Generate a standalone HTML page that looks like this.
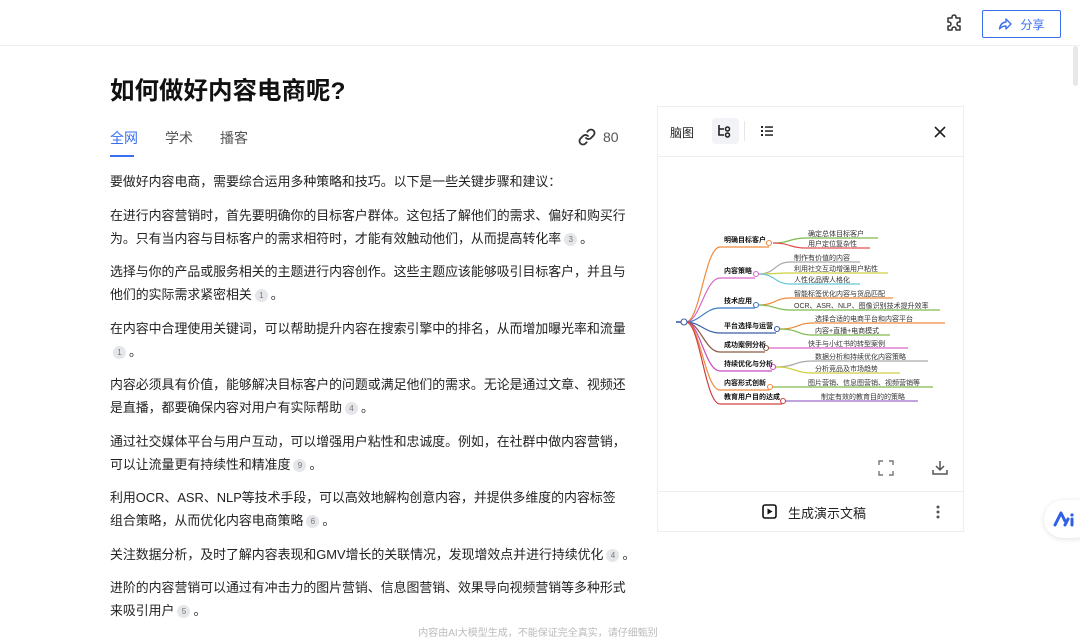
<!DOCTYPE html>
<html><head><meta charset="utf-8"><style>
*{margin:0;padding:0;box-sizing:border-box}
body{width:1080px;height:637px;overflow:hidden;background:#fff;font-family:"Liberation Sans","Noto Sans CJK SC",sans-serif;color:#222;position:relative}
.hdr{position:absolute;left:0;top:0;width:1080px;height:46px;border-bottom:1px solid #eef0f3}
.share{position:absolute;left:982px;top:10px;width:79px;height:28px;border:1px solid #3a6ff0;border-radius:2px;color:#3a6ff0;font-size:12px;display:flex;align-items:center;justify-content:center;gap:8px}
h1{position:absolute;left:110px;top:72px;font-size:24.5px;font-weight:bold;color:#111}
.tabs{position:absolute;left:110px;top:128px;font-size:14px;color:#555}
.tabs span{position:absolute;white-space:nowrap}
.ul{position:absolute;left:110px;top:155px;width:24px;height:2px;background:#3a6ff0}
.body{position:absolute;left:110px;top:170px;width:516px;font-size:12.9px;line-height:23px;color:#222}
.body p{margin-bottom:10.5px}
.n{display:inline-block;width:13px;height:13px;border-radius:50%;background:#e4e6ea;color:#777;font-size:8px;line-height:13px;text-align:center;vertical-align:1px;margin:0 3px}
.panel{position:absolute;left:657px;top:106px;width:307px;height:426px;border:1px solid #eceef2}
.ph{height:50px;border-bottom:1px solid #eceef2;position:relative}
.pf{position:absolute;left:0;top:384px;width:305px;height:41px;border-top:1px solid #eceef2}
.foot{position:absolute;top:624px;left:0;width:1076px;text-align:center;font-size:10px;color:#bbb}
</style></head><body>
<div class="hdr"></div>
<svg style="position:absolute;left:945px;top:14px" width="20" height="20" viewBox="0 0 20 20"><path d="M7 3a2 2 0 0 1 4 0v1h4v4h-1a2 2 0 0 0 0 4h1v4h-4v-1a2 2 0 0 0-4 0v1H3v-4h1a2 2 0 0 0 0-4H3V4h4z" fill="none" stroke="#333" stroke-width="1.5" stroke-linejoin="round"/></svg>
<div class="share"><svg width="14" height="14" viewBox="0 0 14 14"><path d="M8 2l5 5-5 5V9C5 9 3 10 1.5 12 2 8 4 5.5 8 5z" fill="none" stroke="#3a6ff0" stroke-width="1.4" stroke-linejoin="round"/></svg><span>分享</span></div>
<div style="position:absolute;left:1073px;top:46px;width:5px;height:40px;background:#e8e8e8;border-radius:3px"></div>
<h1>如何做好内容电商呢?</h1>
<div class="tabs"><span style="left:0;color:#3a6ff0">全网</span><span style="left:55px">学术</span><span style="left:110px">播客</span></div>
<div class="ul"></div>
<svg style="position:absolute;left:578px;top:128px" width="18" height="18" viewBox="0 0 18 18"><path d="M8 10a3.5 3.5 0 0 0 5 0l2.5-2.5a3.5 3.5 0 0 0-5-5L9.3 3.7M10 8a3.5 3.5 0 0 0-5 0L2.5 10.5a3.5 3.5 0 0 0 5 5l1.2-1.2" fill="none" stroke="#333" stroke-width="1.8" stroke-linecap="round"/></svg>
<div style="position:absolute;left:603px;top:129px;font-size:14px;color:#555">80</div>
<div class="body">
<p>要做好内容电商，需要综合运用多种策略和技巧。以下是一些关键步骤和建议：</p>
<p>在进行内容营销时，首先要明确你的目标客户群体。这包括了解他们的需求、偏好和购买行为。只有当内容与目标客户的需求相符时，才能有效触动他们，从而提高转化率<span class="n">3</span>。</p>
<p>选择与你的产品或服务相关的主题进行内容创作。这些主题应该能够吸引目标客户，并且与他们的实际需求紧密相关<span class="n">1</span>。</p>
<p>在内容中合理使用关键词，可以帮助提升内容在搜索引擎中的排名，从而增加曝光率和流量<span class="n">1</span>。</p>
<p>内容必须具有价值，能够解决目标客户的问题或满足他们的需求。无论是通过文章、视频还是直播，都要确保内容对用户有实际帮助<span class="n">4</span>。</p>
<p>通过社交媒体平台与用户互动，可以增强用户粘性和忠诚度。例如，在社群中做内容营销，可以让流量更有持续性和精准度<span class="n">9</span>。</p>
<p>利用OCR、ASR、NLP等技术手段，可以高效地解构创意内容，并提供多维度的内容标签组合策略，从而优化内容电商策略<span class="n">6</span>。</p>
<p style="white-space:nowrap">关注数据分析，及时了解内容表现和GMV增长的关联情况，发现增效点并进行持续优化<span class="n">4</span>。</p>
<p>进阶的内容营销可以通过有冲击力的图片营销、信息图营销、效果导向视频营销等多种形式来吸引用户<span class="n">5</span>。</p>
</div>
<div class="panel">
<div class="ph">
<span style="position:absolute;left:12px;top:17px;font-size:12px;color:#222">脑图</span>
<div style="position:absolute;left:54px;top:11px;width:27px;height:26px;background:#f1f3f6;border-radius:4px"></div>
<svg style="position:absolute;left:59px;top:16px" width="16" height="16" viewBox="0 0 16 16"><path d="M2 2v10h5M2 6h5" fill="none" stroke="#222" stroke-width="1.6"/><circle cx="10.5" cy="6" r="2" fill="none" stroke="#222" stroke-width="1.5"/><circle cx="10.5" cy="12" r="2" fill="none" stroke="#222" stroke-width="1.5"/></svg>
<div style="position:absolute;left:86px;top:14px;width:1px;height:20px;background:#e6e6e6"></div>
<svg style="position:absolute;left:102px;top:17px" width="14" height="14" viewBox="0 0 14 14"><g fill="#222"><rect x="1" y="2" width="2" height="2"/><rect x="1" y="6" width="2" height="2"/><rect x="1" y="10" width="2" height="2"/><rect x="5" y="2.3" width="8" height="1.5"/><rect x="5" y="6.3" width="8" height="1.5"/><rect x="5" y="10.3" width="8" height="1.5"/></g></svg>
<svg style="position:absolute;left:276px;top:19px" width="12" height="12" viewBox="0 0 12 12"><path d="M1 1l10 10M11 1L1 11" stroke="#222" stroke-width="1.6"/></svg>
</div>
<svg style="position:absolute;left:-658px;top:-107px" width="1080" height="637" font-family="Liberation Sans,Noto Sans CJK SC,sans-serif" font-size="7">
<g fill="none" stroke-width="1.2">
<path d="M676 322h8" stroke="#3b5fa8" stroke-width="1.6"/>
<path d="M686 322C700 322 705 247 720 247H769" stroke="#f08a3c"/>
<path d="M686 322C700 322 705 278 720 278H755" stroke="#d966c7"/>
<path d="M686 322C700 322 705 308 720 308H755" stroke="#3a7ac4"/>
<path d="M686 322C700 322 705 333 720 333H776" stroke="#3b5fa8"/>
<path d="M686 322C700 322 705 352 720 352H765" stroke="#8a5a44"/>
<path d="M686 322C700 322 705 371 720 371H772" stroke="#c84bc0"/>
<path d="M686 322C700 322 705 390 720 390H769" stroke="#f08a3c"/>
<path d="M686 322C700 322 705 404 720 404H782" stroke="#d04040"/>
<path d="M773 243C790 243 790 238 805 238H878" stroke="#7dbb4a"/>
<path d="M773 243C790 243 790 248 805 248H870" stroke="#e05050"/>
<path d="M759 274C775 274 775 262 790 262H860" stroke="#aaa"/>
<path d="M759 274C775 274 775 273 790 273H888" stroke="#cfd040"/>
<path d="M759 274C775 274 775 284 790 284H860" stroke="#66c8d8"/>
<path d="M759 305C775 305 775 298 790 298H893" stroke="#f08a3c"/>
<path d="M759 305C775 305 775 310 790 310H940" stroke="#7dbb4a"/>
<path d="M780 329C798 329 798 323 812 323H945" stroke="#f08a3c"/>
<path d="M780 329C798 329 798 335 812 335H890" stroke="#7dbb4a"/>
<path d="M769 348H908" stroke="#d966c7"/>
<path d="M776 367C795 367 795 361 812 361H928" stroke="#aaa"/>
<path d="M776 367C795 367 795 373 812 373H900" stroke="#cfd040"/>
<path d="M773 387H933" stroke="#7dbb4a"/>
<path d="M786 401H918" stroke="#9b6cc8"/>
</g>
<g fill="#fff" stroke-width="1.1">
<circle cx="684" cy="322" r="3" stroke="#3b5fa8"/>
<circle cx="769" cy="243" r="2.5" stroke="#f08a3c"/>
<circle cx="756" cy="274" r="2.5" stroke="#d966c7"/>
<circle cx="756" cy="305" r="2.5" stroke="#3a7ac4"/>
<circle cx="777" cy="329" r="2.5" stroke="#3b5fa8"/>
<circle cx="766" cy="348" r="2.5" stroke="#8a5a44"/>
<circle cx="773" cy="367" r="2.5" stroke="#c84bc0"/>
<circle cx="770" cy="387" r="2.5" stroke="#f08a3c"/>
<circle cx="783" cy="401" r="2.5" stroke="#d04040"/>
</g>
<g font-weight="bold" fill="#111">
<text x="724" y="242">明确目标客户</text><text x="724" y="273">内容策略</text><text x="724" y="303">技术应用</text><text x="724" y="328">平台选择与运营</text><text x="724" y="347">成功案例分析</text><text x="724" y="366">持续优化与分析</text><text x="724" y="385">内容形式创新</text><text x="724" y="399">教育用户目的达成</text>
</g>
<g fill="#333">
<text x="808" y="236">确定总体目标客户</text><text x="808" y="246">用户定位复杂性</text>
<text x="794" y="260">制作有价值的内容</text><text x="794" y="271">利用社交互动增强用户粘性</text><text x="794" y="282">人性化品牌人格化</text>
<text x="794" y="296">智能标签优化内容与货品匹配</text><text x="794" y="308">OCR、ASR、NLP、图像识别技术提升效率</text>
<text x="815" y="321">选择合适的电商平台和内容平台</text><text x="815" y="333">内容+直播+电商模式</text>
<text x="808" y="346">快手与小红书的转型案例</text>
<text x="815" y="359">数据分析和持续优化内容策略</text><text x="815" y="371">分析竞品及市场趋势</text>
<text x="808" y="385">图片营销、信息图营销、视频营销等</text>
<text x="821" y="399">制定有效的教育目的的策略</text>
</g>
</svg>
<svg style="position:absolute;left:220px;top:353px" width="16" height="16" viewBox="0 0 16 16"><path d="M1 5V1h4M11 1h4v4M15 11v4h-4M5 15H1v-4" fill="none" stroke="#777" stroke-width="1.4"/></svg>
<svg style="position:absolute;left:273px;top:352px" width="18" height="18" viewBox="0 0 18 18"><path d="M9 2v9M5 7l4 4 4-4M2 11v4h14v-4" fill="none" stroke="#555" stroke-width="1.5"/></svg>
<div class="pf">
<svg style="position:absolute;left:104px;top:12px" width="15" height="15" viewBox="0 0 15 15"><rect x="1" y="1" width="13" height="13" rx="2" fill="none" stroke="#111" stroke-width="1.6"/><path d="M5.5 4.5v6l5-3z" fill="#111"/></svg>
<span style="position:absolute;left:130px;top:11px;font-size:13px;color:#222">生成演示文稿</span>
<svg style="position:absolute;left:278px;top:12px" width="4" height="16"><circle cx="2" cy="3" r="1.5" fill="#555"/><circle cx="2" cy="8" r="1.5" fill="#555"/><circle cx="2" cy="13" r="1.5" fill="#555"/></svg>
</div>
</div>
<div style="position:absolute;left:1044px;top:500px;width:50px;height:38px;border-radius:19px;background:#fff;box-shadow:0 1px 6px rgba(0,0,0,.12)"></div>
<svg style="position:absolute;left:1053px;top:509px" width="22" height="20" viewBox="0 0 22 20"><path d="M2 16L8 4l4 8M12 16l3-6" fill="none" stroke="#2f5ee8" stroke-width="3" stroke-linecap="round" stroke-linejoin="round"/><circle cx="19" cy="6" r="1.6" fill="#2f5ee8"/><path d="M19 10v6" stroke="#2f5ee8" stroke-width="3" stroke-linecap="round"/></svg>
<div class="foot">内容由AI大模型生成，不能保证完全真实，请仔细甄别</div>
</body></html>
